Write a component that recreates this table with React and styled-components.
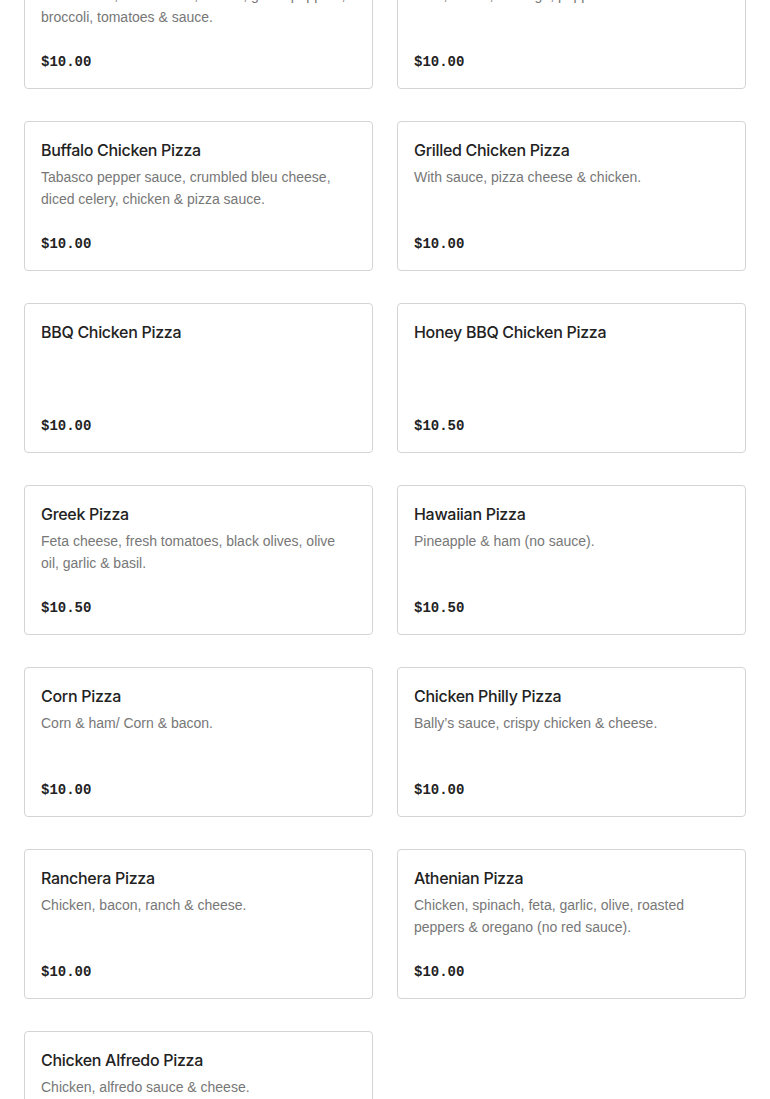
import styled, { createGlobalStyle } from "styled-components";

const items = [
  {
    name: "Veggie Pizza",
    desc: "Mushrooms, black olives, onions, green peppers, broccoli, tomatoes & sauce.",
    price: "$10.00",
  },
  { name: "Meat Lovers Pizza", desc: "Ham, bacon, sausage, pepperoni & sauce.", price: "$10.00" },
  {
    name: "Buffalo Chicken Pizza",
    desc: "Tabasco pepper sauce, crumbled bleu cheese, diced celery, chicken & pizza sauce.",
    price: "$10.00",
  },
  { name: "Grilled Chicken Pizza", desc: "With sauce, pizza cheese & chicken.", price: "$10.00" },
  { name: "BBQ Chicken Pizza", desc: "", price: "$10.00" },
  { name: "Honey BBQ Chicken Pizza", desc: "", price: "$10.50" },
  {
    name: "Greek Pizza",
    desc: "Feta cheese, fresh tomatoes, black olives, olive oil, garlic & basil.",
    price: "$10.50",
  },
  { name: "Hawaiian Pizza", desc: "Pineapple & ham (no sauce).", price: "$10.50" },
  { name: "Corn Pizza", desc: "Corn & ham/ Corn & bacon.", price: "$10.00" },
  { name: "Chicken Philly Pizza", desc: "Bally’s sauce, crispy chicken & cheese.", price: "$10.00" },
  { name: "Ranchera Pizza", desc: "Chicken, bacon, ranch & cheese.", price: "$10.00" },
  {
    name: "Athenian Pizza",
    desc: "Chicken, spinach, feta, garlic, olive, roasted peppers & oregano (no red sauce).",
    price: "$10.00",
  },
  { name: "Chicken Alfredo Pizza", desc: "Chicken, alfredo sauce & cheese.", price: "$10.00" },
];

const App = () => {
  return (
    <>
      <GlobalStyle />
      <Menu>
        {items.map((item) => (
          <Card key={item.name}>
            <Name>{item.name}</Name>
            {item.desc && <Desc>{item.desc}</Desc>}
            <Price>{item.price}</Price>
          </Card>
        ))}
      </Menu>
    </>
  );
};

const GlobalStyle = createGlobalStyle`
  body {
    margin: 0;
    background: #fff;
    font-family: Inter, "Liberation Sans", sans-serif;
    overflow: hidden;
  }
`;

const Menu = styled.div`
  display: grid;
  grid-template-columns: 1fr 1fr;
  column-gap: 24px;
  row-gap: 32px;
  padding: 0 24px;
  margin-top: -61px;
`;

const Card = styled.div`
  display: flex;
  flex-direction: column;
  height: 150px;
  box-sizing: border-box;
  padding: 16px;
  border: 1px solid #d4d4d4;
  border-radius: 4px;
  background: #fff;
`;

const Name = styled.h3`
  margin: 0;
  font-size: 16px;
  font-weight: 500;
  letter-spacing: -0.3px;
  line-height: 24px;
  color: #222;
`;

const Desc = styled.p`
  margin: 4px 0 0;
  font-family: "Liberation Sans", Arial, sans-serif;
  font-size: 14px;
  line-height: 22px;
  color: #777;
`;

const Price = styled.span`
  margin-top: auto;
  font-family: "Liberation Mono", monospace;
  font-size: 14px;
  font-weight: 700;
  line-height: 20px;
  color: #222;
`;

export default App;
